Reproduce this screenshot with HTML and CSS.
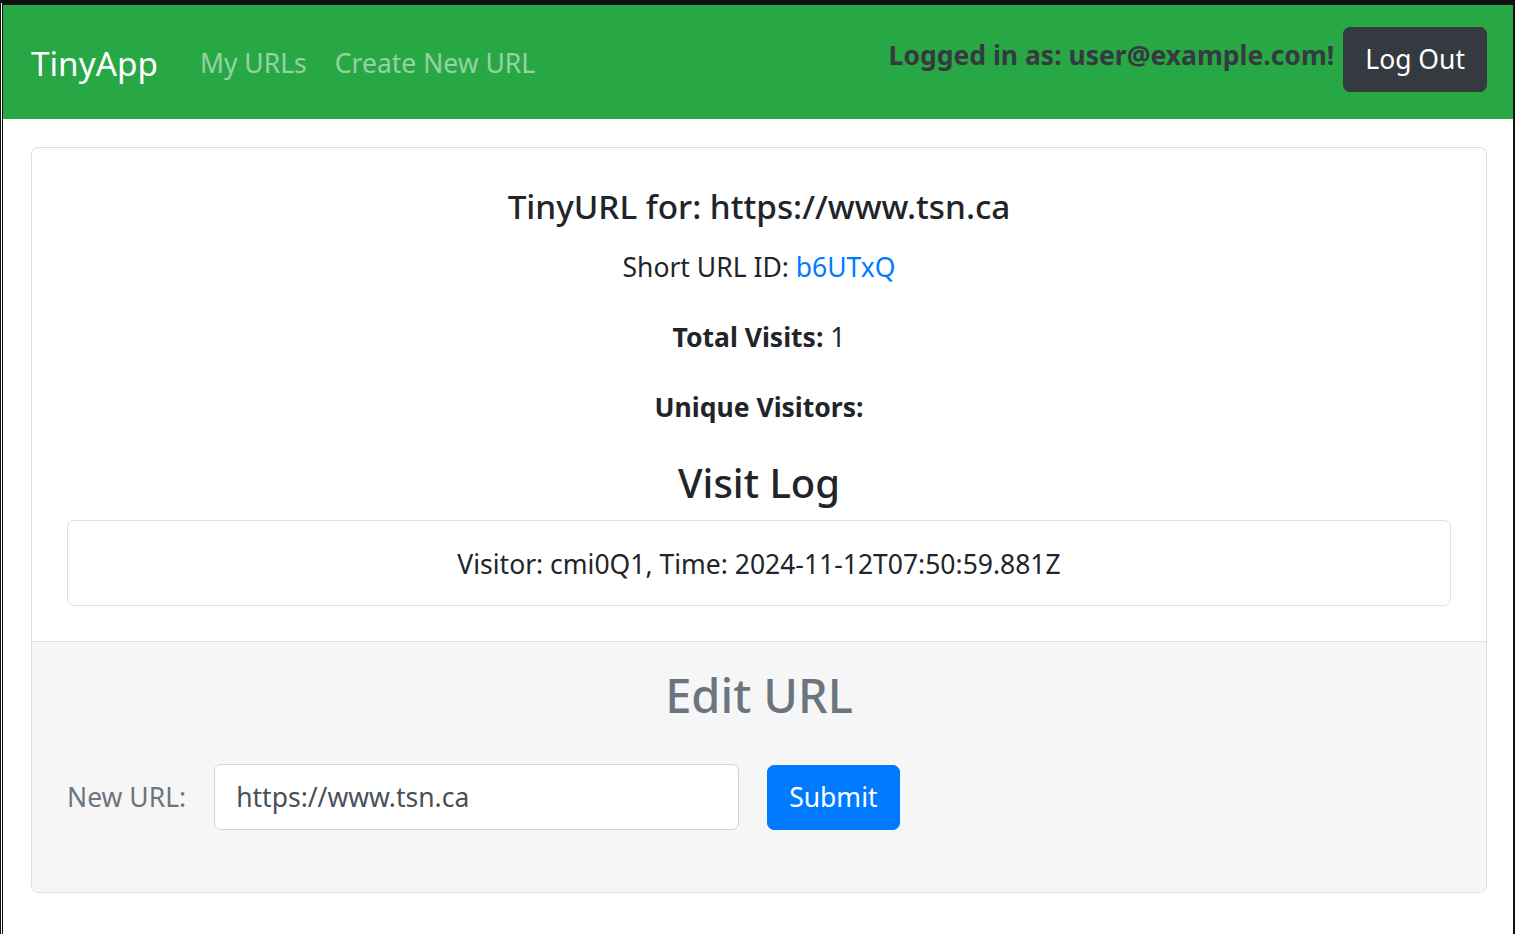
FILE: index.html
```html
<!DOCTYPE html>
<html lang="en">
<head>
<meta charset="utf-8">
<title>TinyApp</title>
<link rel="stylesheet" href="styles.css">
</head>
<body>
<div class="frame">
  <nav class="navbar">
    <a class="brand" href="#">TinyApp</a>
    <ul class="nav-links">
      <li><a class="nav-link" href="#">My URLs</a></li>
      <li><a class="nav-link" href="#">Create New URL</a></li>
    </ul>
    <form class="user-box">
      <span class="user-text">Logged in as: user@example.com!</span>
      <button type="button" class="btn btn-dark">Log Out</button>
    </form>
  </nav>
  <main class="container">
    <div class="card">
      <div class="card-body">
        <h5 class="card-title">TinyURL for: https://www.tsn.ca</h5>
        <p class="line short-line">Short URL ID: <a class="link" href="#">b6UTxQ</a></p>
        <p class="line"><strong>Total Visits:</strong> 1</p>
        <p class="line"><strong>Unique Visitors:</strong></p>
        <h4 class="log-title">Visit Log</h4>
        <ul class="list-group">
          <li class="list-item">Visitor: cmi0Q1, Time: 2024-11-12T07:50:59.881Z</li>
        </ul>
      </div>
      <div class="card-footer">
        <h3 class="edit-title">Edit URL</h3>
        <form class="edit-form">
          <label class="edit-label" for="newurl">New URL:</label>
          <input class="edit-input" id="newurl" type="text" value="https://www.tsn.ca">
          <button type="button" class="btn btn-primary">Submit</button>
        </form>
      </div>
    </div>
  </main>
</div>
</body>
</html>
```
FILE: styles.css
```css
* { box-sizing: border-box; }
html, body { margin: 0; padding: 0; background: #fff; }
body {
  font-family: "Noto Sans", "Open Sans", sans-serif;
  font-size: 26.5px;
  line-height: 42px;
  color: #212529;
}
.frame {
  min-height: 934px;
  border-top: 5px solid #111;
  border-left: 3px double #111;
  border-right: 2px solid #111;
  background: #fff;
}
.navbar {
  height: 114px;
  background: #28a745;
  display: flex;
  align-items: center;
  padding: 0 26px 0 28px;
}
.brand {
  font-size: 33.3px;
  line-height: 52px;
  color: #fff;
  text-decoration: none;
  margin-right: 28px;
  margin-top: 2px;
}
.nav-links {
  list-style: none;
  margin: 0;
  padding: 0;
  display: flex;
  margin-top: 2px;
}
.nav-link {
  display: block;
  padding: 0 14px;
  color: rgba(255,255,255,.5);
  text-decoration: none;
  line-height: 42px;
}
.user-box {
  margin: 0 0 6px auto;
  display: flex;
  align-items: center;
  gap: 9px;
}
.user-text {
  font-weight: 700;
  color: #343a40;
  margin-bottom: 8px;
}
.btn {
  font-family: inherit;
  font-size: 26.5px;
  line-height: 42px;
  height: 65px;
  padding: 0 21px;
  border: 1px solid transparent;
  border-radius: 7px;
  cursor: pointer;
}
.btn-dark { background: #343a40; border-color: #343a40; color: #fff; }
.btn-primary { background: #007bff; border-color: #007bff; color: #fff; }

.container { padding: 28px 26px 0 28px; }
.card {
  border: 1px solid #dfdfdf;
  border-radius: 7px;
  overflow: hidden;
  text-align: center;
}
.card-body { padding: 37px 35px 35px; }
.card-title {
  font-size: 33.3px;
  font-weight: 500;
  line-height: 42px;
  margin: 0 0 19px;
}
.line { margin: 0 0 28px; line-height: 42px; }
.link { color: #007bff; text-decoration: none; }
.log-title {
  font-size: 40px;
  font-weight: 500;
  line-height: 50px;
  margin: 30px 0 12px;
}
.list-group { list-style: none; margin: 0; padding: 0; }
.list-item {
  border: 1px solid #dfdfdf;
  border-radius: 7px;
  padding: 22px 35px 20px;
  line-height: 42px;
}
.card-footer {
  background: #f6f6f6;
  border-top: 1px solid #dfdfdf;
  padding: 24px 35px 62px;
}
.edit-title {
  font-size: 47px;
  font-weight: 500;
  line-height: 58px;
  color: #6c757d;
  margin: 0 0 40px;
}
.edit-form {
  display: flex;
  align-items: center;
  gap: 28px;
  text-align: left;
}
.edit-label { color: #6c757d; }
.edit-input {
  width: 525px;
  height: 66px;
  font-family: inherit;
  font-size: 26.5px;
  color: #495057;
  padding: 10px 21px;
  border: 1px solid #ced4da;
  border-radius: 7px;
  background: #fff;
}
```
